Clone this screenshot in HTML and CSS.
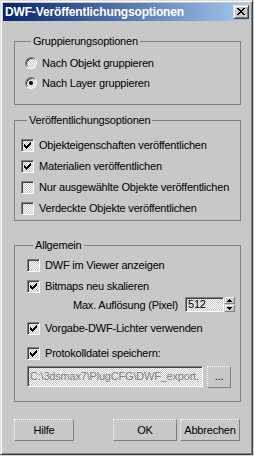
FILE: index.html
```html
<!DOCTYPE html>
<html lang="de">
<head>
<meta charset="utf-8">
<title>DWF-Veröffentlichungsoptionen</title>
<link rel="stylesheet" href="styles.css">
</head>
<body>
<div class="window">
  <div class="titlebar">
    <span class="title">DWF-Veröffentlichungsoptionen</span>
    <div class="close">
      <svg class="xglyph" width="8" height="7" viewBox="0 0 8 7" shape-rendering="crispEdges">
        <rect x="0" y="0" width="2" height="1"/><rect x="6" y="0" width="2" height="1"/>
        <rect x="1" y="1" width="2" height="1"/><rect x="5" y="1" width="2" height="1"/>
        <rect x="2" y="2" width="4" height="1"/>
        <rect x="3" y="3" width="2" height="1"/>
        <rect x="2" y="4" width="4" height="1"/>
        <rect x="1" y="5" width="2" height="1"/><rect x="5" y="5" width="2" height="1"/>
        <rect x="0" y="6" width="2" height="1"/><rect x="6" y="6" width="2" height="1"/>
      </svg>
    </div>
  </div>

  <div class="content">
    <div class="group g1">
      <div class="legend">Gruppierungsoptionen</div>
      <div class="row first"><span class="radio"></span><span class="lbl">Nach Objekt gruppieren</span></div>
      <div class="row"><span class="radio on"></span><span class="lbl">Nach Layer gruppieren</span></div>
    </div>

    <div class="group g2">
      <div class="legend">Veröffentlichungsoptionen</div>
      <div class="row first"><span class="check on"><svg width="7" height="7" viewBox="0 0 7 7" shape-rendering="crispEdges"><polygon points="0,2 1,2 1,3 2,3 2,4 3,4 3,3 4,3 4,2 5,2 5,1 6,1 6,0 7,0 7,3 6,3 6,4 5,4 5,5 4,5 4,6 3,6 3,7 2,7 2,6 1,6 1,5 0,5"/></svg></span><span class="lbl">Objekteigenschaften veröffentlichen</span></div>
      <div class="row"><span class="check on"><svg width="7" height="7" viewBox="0 0 7 7" shape-rendering="crispEdges"><polygon points="0,2 1,2 1,3 2,3 2,4 3,4 3,3 4,3 4,2 5,2 5,1 6,1 6,0 7,0 7,3 6,3 6,4 5,4 5,5 4,5 4,6 3,6 3,7 2,7 2,6 1,6 1,5 0,5"/></svg></span><span class="lbl">Materialien veröffentlichen</span></div>
      <div class="row"><span class="check"></span><span class="lbl">Nur ausgewählte Objekte veröffentlichen</span></div>
      <div class="row"><span class="check"></span><span class="lbl">Verdeckte Objekte veröffentlichen</span></div>
    </div>

    <div class="group g3">
      <div class="legend">Allgemein</div>
      <div class="row first"><span class="check"></span><span class="lbl">DWF im Viewer anzeigen</span></div>
      <div class="row"><span class="check on"><svg width="7" height="7" viewBox="0 0 7 7" shape-rendering="crispEdges"><polygon points="0,2 1,2 1,3 2,3 2,4 3,4 3,3 4,3 4,2 5,2 5,1 6,1 6,0 7,0 7,3 6,3 6,4 5,4 5,5 4,5 4,6 3,6 3,7 2,7 2,6 1,6 1,5 0,5"/></svg></span><span class="lbl">Bitmaps neu skalieren</span></div>
      <div class="max-row">
        <span class="max-lbl">Max. Auflösung (Pixel)</span>
        <span class="spin-field">512</span>
        <svg class="spin-arrows" width="10" height="15" viewBox="0 0 10 15" shape-rendering="crispEdges">
          <rect x="0" y="0" width="10" height="15" fill="#c8c8c8"/>
          <rect x="0" y="0" width="10" height="1" fill="#fff"/>
          <rect x="0" y="0" width="1" height="7" fill="#fff"/>
          <rect x="0" y="6" width="10" height="1" fill="#808080"/>
          <rect x="9" y="0" width="1" height="7" fill="#808080"/>
          <rect x="0" y="8" width="10" height="1" fill="#fff"/>
          <rect x="0" y="8" width="1" height="7" fill="#fff"/>
          <rect x="0" y="14" width="10" height="1" fill="#808080"/>
          <rect x="9" y="8" width="1" height="7" fill="#808080"/>
          <rect x="4" y="2" width="1" height="1" fill="#000"/>
          <rect x="3" y="3" width="3" height="1" fill="#000"/>
          <rect x="2" y="4" width="5" height="1" fill="#000"/>
          <rect x="2" y="10" width="5" height="1" fill="#000"/>
          <rect x="3" y="11" width="3" height="1" fill="#000"/>
          <rect x="4" y="12" width="1" height="1" fill="#000"/>
        </svg>
      </div>
      <div class="row r-vorgabe"><span class="check on"><svg width="7" height="7" viewBox="0 0 7 7" shape-rendering="crispEdges"><polygon points="0,2 1,2 1,3 2,3 2,4 3,4 3,3 4,3 4,2 5,2 5,1 6,1 6,0 7,0 7,3 6,3 6,4 5,4 5,5 4,5 4,6 3,6 3,7 2,7 2,6 1,6 1,5 0,5"/></svg></span><span class="lbl">Vorgabe-DWF-Lichter verwenden</span></div>
      <div class="row r-proto"><span class="check on"><svg width="7" height="7" viewBox="0 0 7 7" shape-rendering="crispEdges"><polygon points="0,2 1,2 1,3 2,3 2,4 3,4 3,3 4,3 4,2 5,2 5,1 6,1 6,0 7,0 7,3 6,3 6,4 5,4 5,5 4,5 4,6 3,6 3,7 2,7 2,6 1,6 1,5 0,5"/></svg></span><span class="lbl">Protokolldatei speichern:</span></div>
      <div class="path-row">
        <span class="path-field">C:\3dsmax7\PlugCFG\DWF_export.</span>
        <span class="dots-btn">...</span>
      </div>
    </div>

    <div class="buttons">
      <span class="btn btn-hilfe">Hilfe</span>
      <span class="btn btn-ok">OK</span>
      <span class="btn btn-abbr">Abbrechen</span>
    </div>
  </div>
</div>
</body>
</html>
```

FILE: styles.css
```css
html, body {
  margin: 0;
  padding: 0;
}
body {
  background: #d0d0d0;
  font-family: "Liberation Sans", Arial, sans-serif;
  font-size: 11px;
  letter-spacing: -0.2px;
  color: #000;
  width: 254px;
  height: 456px;
  overflow: hidden;
}
.window {
  width: 253px;
  height: 455px;
  box-sizing: border-box;
  border: 1px solid;
  border-color: #dcdcdc #404040 #404040 #dcdcdc;
  box-shadow: inset 1px 1px #fff, inset -1px -1px #808080;
  padding: 2px;
  background: #c8c8c8;
  display: flex;
  flex-direction: column;
}
.titlebar {
  height: 18px;
  display: flex;
  align-items: center;
  background: linear-gradient(to right, #0a246a, #a6caf0);
  padding-left: 2px;
  flex: none;
}
.title {
  flex: 1;
  color: #fff;
  font-weight: bold;
  font-size: 12px;
  letter-spacing: -0.15px;
  white-space: nowrap;
  line-height: 14px;
}
.close {
  width: 16px;
  height: 14px;
  margin-right: 1px;
  box-sizing: border-box;
  border: 1px solid;
  border-color: #dcdcdc #404040 #404040 #dcdcdc;
  box-shadow: inset 1px 1px #fff, inset -1px -1px #808080;
  background: #c8c8c8;
  padding: 2px 0 0 3px;
}
.xglyph {
  display: block;
}
.content {
  flex: 1;
  padding: 0 9px 0 11px;
}
.group {
  border: 1px solid #808080;
}
.legend {
  width: max-content;
  margin: -7px 0 0 6px;
  padding: 0 2px;
  background: #c8c8c8;
  line-height: 13px;
}
.row {
  display: flex;
  align-items: center;
  height: 21px;
  line-height: 13px;
  white-space: nowrap;
}
.lbl {
  display: block;
}
.g1 {
  margin-top: 20px;
  padding: 0 0 11px 10px;
}
.g1 .row {
  height: 20px;
}
.g1 .row.first {
  margin-top: 5px;
}
.g2 {
  margin-top: 15px;
  padding: 0 0 1px 6px;
}
.g2 .row.first {
  margin-top: 8px;
}
.g3 {
  margin-top: 24px;
  padding: 0 0 13px 12px;
}
.g3 .row.first {
  margin-top: 3px;
}
.r-vorgabe {
  margin-top: 6px;
}
.r-proto {
  margin-top: 4px;
}

.radio {
  flex: none;
  width: 12px;
  height: 12px;
  box-sizing: border-box;
  border-radius: 50%;
  border: 1px solid;
  border-color: #808080 #fff #fff #808080;
  box-shadow: inset 1px 1px #404040, inset -1px -1px #dcdcdc;
  background: repeating-conic-gradient(#fff 0 25%, #c8c8c8 0 50%) 0 0 / 2px 2px;
  margin-right: 5px;
  display: flex;
  align-items: center;
  justify-content: center;
}
.radio.on::after {
  content: "";
  width: 4px;
  height: 4px;
  border-radius: 50%;
  background: #000;
}
.check {
  flex: none;
  width: 13px;
  height: 13px;
  box-sizing: border-box;
  border: 1px solid;
  border-color: #808080 #fff #fff #808080;
  box-shadow: inset 1px 1px #404040, inset -1px -1px #dcdcdc;
  background: repeating-conic-gradient(#fff 0 25%, #c8c8c8 0 50%) 0 0 / 2px 2px;
  padding: 2px;
  margin-right: 5px;
}
.check svg {
  display: block;
}

.max-row {
  display: flex;
  justify-content: flex-end;
  align-items: center;
  height: 15px;
  padding-right: 5px;
}
.max-lbl {
  margin-right: 7px;
  line-height: 13px;
  margin-top: 2px;
  white-space: nowrap;
}
.spin-field {
  width: 39px;
  height: 15px;
  box-sizing: border-box;
  border: 1px solid;
  border-color: #808080 #fff #fff #808080;
  box-shadow: inset 1px 1px #404040, inset -1px -1px #dcdcdc;
  background: repeating-conic-gradient(#fff 0 25%, #c8c8c8 0 50%) 0 0 / 2px 2px;
  padding-left: 2px;
  line-height: 13px;
}
.spin-arrows {
  display: block;
  margin-left: 1px;
}

.path-row {
  display: flex;
  align-items: flex-start;
  height: 22px;
  margin-top: 2px;
}
.path-field {
  width: 176px;
  height: 21px;
  box-sizing: border-box;
  border: 1px solid;
  border-color: #808080 #fff #fff #808080;
  box-shadow: inset 1px 1px #404040, inset -1px -1px #dcdcdc;
  background: repeating-conic-gradient(#fff 0 25%, #c8c8c8 0 50%) 0 0 / 2px 2px;
  color: #808080;
  padding-left: 2px;
  line-height: 19px;
  white-space: nowrap;
  overflow: hidden;
}
.dots-btn {
  width: 24px;
  height: 22px;
  margin-left: 4px;
  box-sizing: border-box;
  border-top: 1px dotted #fff;
  border-left: 1px dotted #fff;
  border-right: 1px solid #808080;
  border-bottom: 1px solid #808080;
  text-align: center;
  line-height: 19px;
}

.buttons {
  display: flex;
  margin-top: 17px;
}
.btn {
  display: flex;
  align-items: center;
  justify-content: center;
  height: 22px;
  box-sizing: border-box;
  border-top: 1px dotted #fff;
  border-left: 1px dotted #fff;
  border-right: 1px solid #808080;
  border-bottom: 1px solid #808080;
  line-height: 13px;
}
.btn-hilfe {
  width: 60px;
}
.btn-ok {
  width: 64px;
  margin-left: auto;
}
.btn-abbr {
  width: 60px;
  margin-left: 3px;
  margin-right: 1px;
}
```
